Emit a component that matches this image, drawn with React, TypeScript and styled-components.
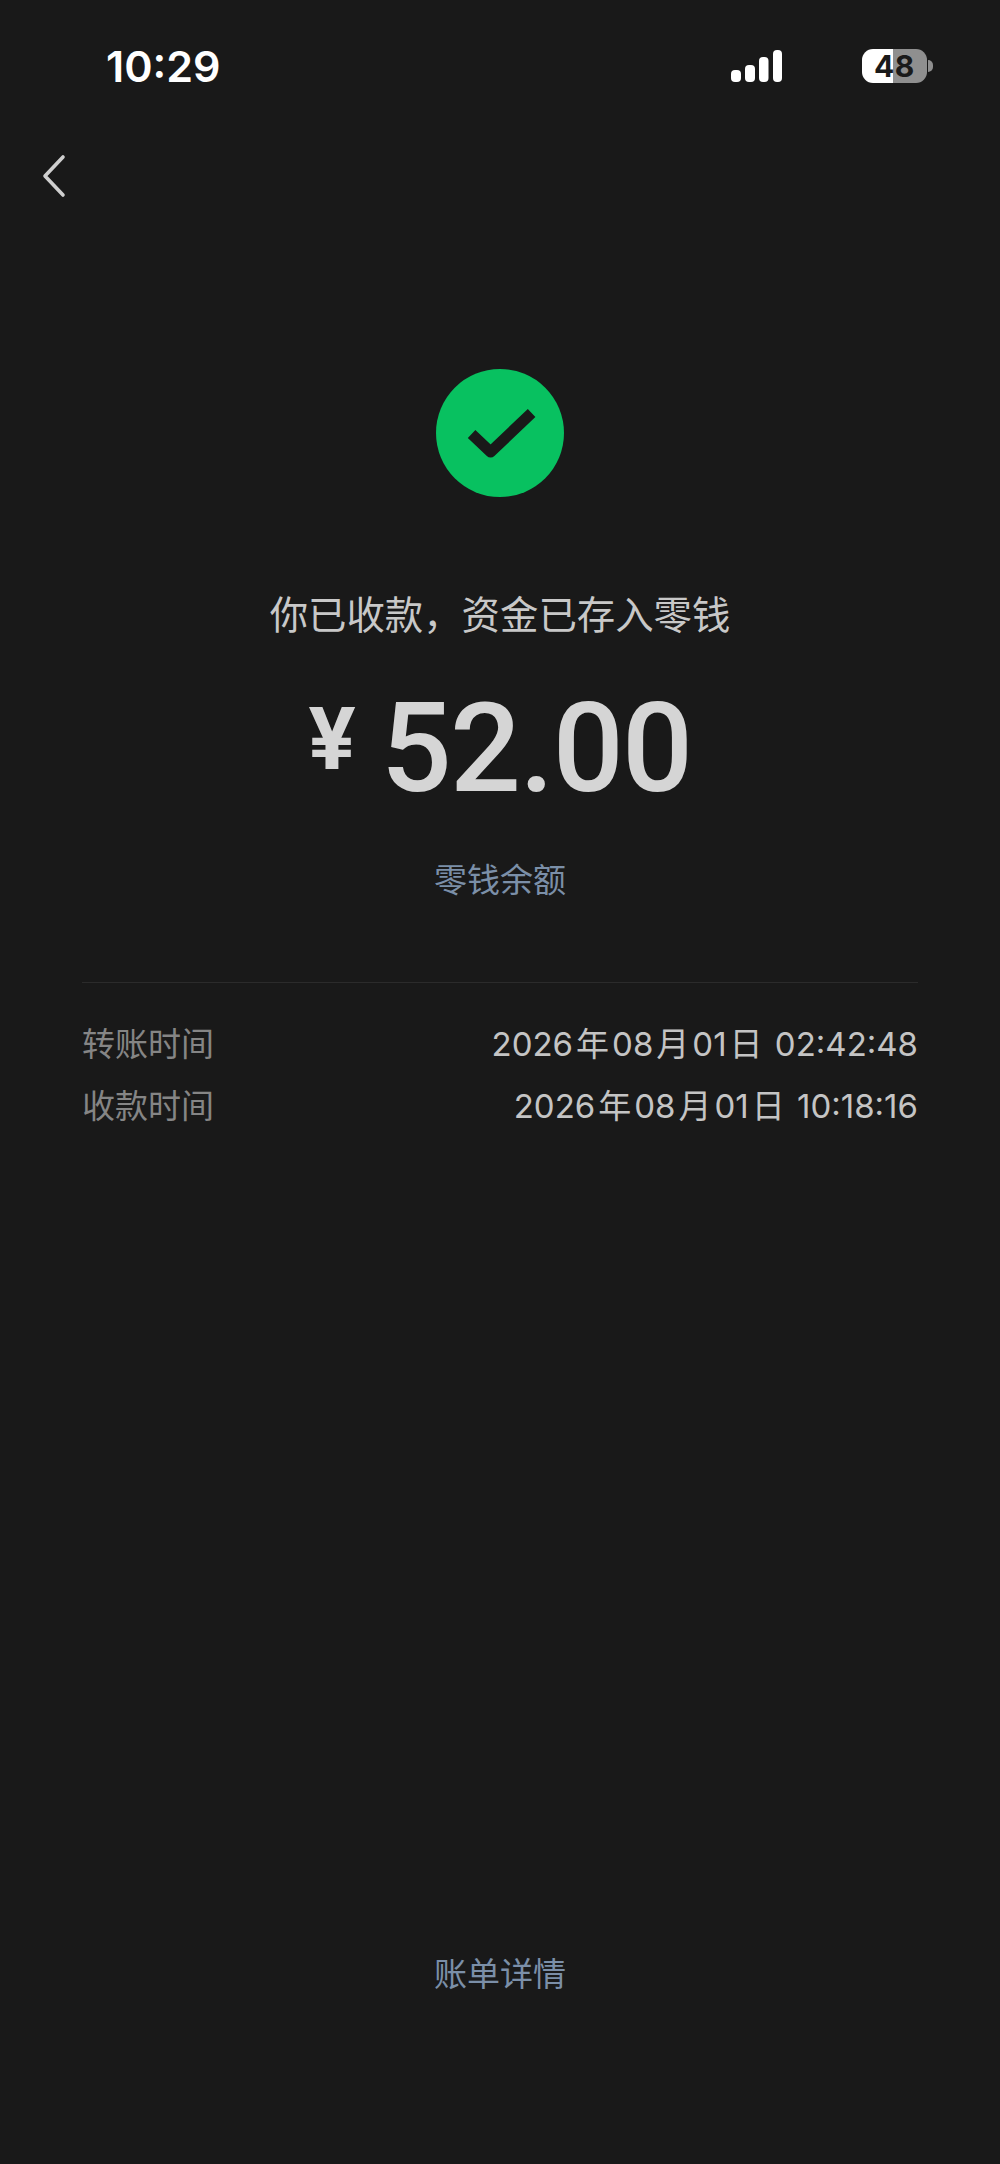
import * as React from "react";
import styled, { createGlobalStyle } from "styled-components";

const GlobalStyle = createGlobalStyle`
    html, body {
        margin: 0;
        padding: 0;
        background: #191919;
    }
`;

const Page = styled.div`
    display: flex;
    flex-direction: column;
    width: 1000px;
    min-height: 2164px;
    background: #191919;
    font-family: Roboto, "Noto Sans CJK SC", sans-serif;
    color: #c8c8c8;
`;

const StatusBar = styled.div`
    display: flex;
    align-items: center;
    justify-content: space-between;
    height: 132px;
    padding: 0 67px 0 106px;
`;

const Clock = styled.span`
    font-family: Inter, sans-serif;
    font-size: 43px;
    font-weight: 600;
    color: #ffffff;
`;

const StatusIcons = styled.div`
    display: flex;
    align-items: center;
    gap: 80px;
`;

const Battery = styled.div`
    position: relative;
    display: flex;
    align-items: center;
    justify-content: center;
    width: 65px;
    height: 34px;
    margin-right: 6px;
    border-radius: 11px;
    background: linear-gradient(to right, #ffffff 0 48%, #8f8f8f 48% 100%);
    font-family: Inter, sans-serif;
    font-size: 30px;
    font-weight: 700;
    letter-spacing: 0.6px;
    color: #1a1a1a;

    &:after {
        content: "";
        position: absolute;
        right: -6px;
        top: 11px;
        width: 5px;
        height: 12px;
        border-radius: 0 6px 6px 0;
        background: #8f8f8f;
    }
`;

const Nav = styled.div`
    display: flex;
    padding: 22px 0 0 42px;
`;

const Hero = styled.div`
    display: flex;
    flex-direction: column;
    align-items: center;
    margin-top: 171px;
`;

const Title = styled.div`
    margin-top: 94px;
    font-size: 38.4px;
    line-height: 50px;
    color: #c8c8c8;
`;

const Amount = styled.div`
    display: flex;
    align-items: flex-start;
    gap: 25px;
    margin-top: 38px;
    height: 140px;
    color: #d5d5d5;
`;

const Currency = styled.span`
    font-size: 88px;
    font-weight: 700;
    line-height: 120px;
`;

const Figure = styled.span`
    font-size: 125px;
    font-weight: 500;
    line-height: 140px;
    letter-spacing: -1.6px;
`;

const LinkText = styled.div`
    font-size: 33px;
    line-height: 50px;
    color: #7b8fa8;
`;

const BalanceWrap = styled.div`
    margin-top: 37px;
`;

const Details = styled.div`
    margin: 76px 82px 0;
    padding-top: 28px;
    border-top: 1px solid #2b2b2b;
`;

const Row = styled.div`
    display: flex;
    align-items: center;
    justify-content: space-between;
    height: 62px;
`;

const Label = styled.span`
    font-size: 33px;
    color: #858585;
`;

const Value = styled.span`
    font-family: Inter, "Noto Sans CJK SC", sans-serif;
    font-size: 33px;
    color: #c4c4c4;
`;

const Unit = styled.span`
    margin: 0 3px;
`;

const Footer = styled.div`
    display: flex;
    justify-content: center;
    margin-top: auto;
    padding-bottom: 164px;
`;

const SignalIcon = () => (
    <svg width="51" height="32" viewBox="0 0 51 32" fill="#ffffff">
        <rect x="0" y="20" width="10" height="12" rx="4" />
        <rect x="14" y="15" width="10" height="17" rx="4" />
        <rect x="28" y="7" width="9.5" height="25" rx="4" />
        <rect x="42" y="0" width="9" height="32" rx="4" />
    </svg>
);

const BackIcon = () => (
    <svg width="24" height="44" viewBox="0 0 24 44" fill="none" stroke="#cfcfcf" strokeWidth="3.6" strokeLinecap="round" strokeLinejoin="round">
        <path d="M21 3 L3 22 L21 41" />
    </svg>
);

const CheckIcon = () => (
    <svg width="128" height="128" viewBox="0 0 128 128">
        <circle cx="64" cy="64" r="64" fill="#08c160" />
        <path d="M35.6 65 L54.6 83 L95.6 44" fill="none" stroke="#191919" strokeWidth="11" strokeLinejoin="round" />
    </svg>
);

const DateTime = ({ time }: { time: string }) => (
    <Value>
        2026<Unit>年</Unit>08<Unit>月</Unit>01<Unit>日</Unit> {time}
    </Value>
);

export default function App() {
    return (
        <Page>
            <GlobalStyle />
            <StatusBar>
                <Clock>10:29</Clock>
                <StatusIcons>
                    <SignalIcon />
                    <Battery>48</Battery>
                </StatusIcons>
            </StatusBar>
            <Nav>
                <BackIcon />
            </Nav>
            <Hero>
                <CheckIcon />
                <Title>你已收款，资金已存入零钱</Title>
                <Amount>
                    <Currency>¥</Currency>
                    <Figure>52.00</Figure>
                </Amount>
                <BalanceWrap>
                    <LinkText>零钱余额</LinkText>
                </BalanceWrap>
            </Hero>
            <Details>
                <Row>
                    <Label>转账时间</Label>
                    <DateTime time="02:42:48" />
                </Row>
                <Row>
                    <Label>收款时间</Label>
                    <DateTime time="10:18:16" />
                </Row>
            </Details>
            <Footer>
                <LinkText>账单详情</LinkText>
            </Footer>
        </Page>
    );
}
